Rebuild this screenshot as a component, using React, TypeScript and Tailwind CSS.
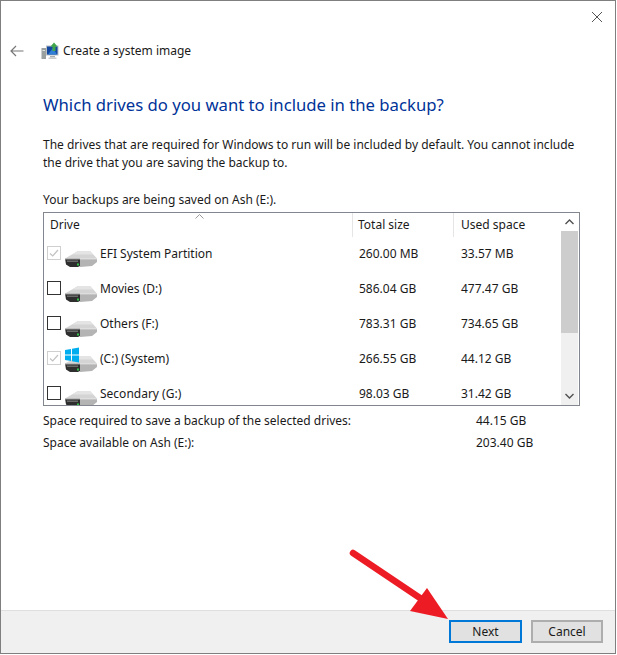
const font = { fontFamily: '"Noto Sans", "Open Sans", sans-serif' };

const rows = [
  { name: 'EFI System Partition', total: '260.00 MB', used: '33.57 MB', locked: true },
  { name: 'Movies (D:)', total: '586.04 GB', used: '477.47 GB' },
  { name: 'Others (F:)', total: '783.31 GB', used: '734.65 GB' },
  { name: '(C:) (System)', total: '266.55 GB', used: '44.12 GB', locked: true, windows: true },
  { name: 'Secondary (G:)', total: '98.03 GB', used: '31.42 GB' },
];

function DriveIcon({ windows }: { windows?: boolean }) {
  return (
    <svg width="34" height="34" viewBox="0 0 34 34" className="shrink-0">
      <path d="M1 23.5 L14 16 H26 L33 23.5 Z" fill="#d4d4d4" />
      <path d="M14 16 H26 L29 19.5 H8 Z" fill="#e4e4e4" />
      <path d="M1 23.5 H16 V31 L14 32 H6 L2 29.5 Z" fill="#2e2e2e" />
      <path d="M16 23.5 H33 V27 L28 31 L16 32 Z" fill="#b4b4b4" />
      <path d="M1 23.5 H33 V24.3 H1 Z" fill="#efefef" />
      <rect x="3" y="25.5" width="11" height="1.5" fill="#6a6a6a" />
      <rect x="13" y="28.5" width="2" height="2" fill="#35c24a" />
      {windows && (
        <path d="M1 10 L7 9 V14.5 H1 Z M8 8.8 L15 7.5 V14.5 H8 Z M1 15.5 H7 V21 L1 20 Z M8 15.5 H15 V22.5 L8 21.2 Z" fill="#00adef" />
      )}
    </svg>
  );
}

function CheckBox({ locked }: { locked?: boolean }) {
  return (
    <div className={`w-[14px] h-[14px] shrink-0 border flex items-center justify-center ${locked ? 'border-[#cfcfcf]' : 'border-[#333333]'}`}>
      {locked && (
        <svg width="12" height="12" viewBox="0 0 12 12">
          <path d="M2 6.5 L4.7 9 L10 3" fill="none" stroke="#c2c2c2" strokeWidth="1.2" />
        </svg>
      )}
    </div>
  );
}

function SystemImageIcon() {
  return (
    <svg width="18" height="18" viewBox="0 0 18 18">
      <rect x="0.5" y="6" width="4.5" height="11" fill="#9a9f9f" />
      <rect x="1.5" y="8" width="2.5" height="1" fill="#dfe3e3" />
      <rect x="5" y="3.5" width="12.5" height="10" fill="#b9c0c4" />
      <rect x="6" y="4.5" width="10.5" height="8" fill="#14479f" />
      <path d="M7 12.5 L12 6 L16 12.5 Z" fill="#2f7fd6" />
      <rect x="9" y="14" width="5" height="1.5" fill="#a9adad" />
      <rect x="7.5" y="15.5" width="8" height="1.5" fill="#c9cccc" />
      <path d="M13 0.5 L16.5 4.5 H14.5 V9 H11.5 V4.5 H9.5 Z" fill="#3fa64a" />
    </svg>
  );
}

export default function App() {
  return (
    <div style={font} className="relative w-[617px] h-[655px] bg-white overflow-hidden text-[12px] text-[#1a1a1a]">
      <div className="w-[616px] h-[654px] border border-[#7f7f7f] flex flex-col">
        <div className="h-[32px] flex justify-end pr-[12px] pt-[10px]">
          <svg width="12" height="12" viewBox="0 0 12 12">
            <path d="M1 1 L11 11 M11 1 L1 11" stroke="#555555" strokeWidth="1" fill="none" />
          </svg>
        </div>

        <div className="h-[36px] flex items-center pl-[9px]">
          <svg width="14" height="12" viewBox="0 0 14 12">
            <path d="M13.5 6 H1 M6 1 L1 6 L6 11" stroke="#777777" strokeWidth="1.2" fill="none" />
          </svg>
          <div className="ml-[17px] mr-[4px] flex items-center">
            <SystemImageIcon />
          </div>
          <span className="text-[12px]">Create a system image</span>
        </div>

        <div className="flex-1 pl-[42px] pr-[36px]">
          <h1 className="mt-[24px] text-[16.7px] leading-[24px] font-normal text-[#003399]">
            Which drives do you want to include in the backup?
          </h1>
          <p className="mt-[19px] leading-[18px] w-[540px]">
            The drives that are required for Windows to run will be included by default. You cannot include the drive that you are saving the backup to.
          </p>
          <p className="mt-[19px] leading-[18px]">Your backups are being saved on Ash (E:).</p>

          <div className="mt-[3px] w-[537px] h-[194px] border border-[#82878f] flex overflow-hidden">
            <div className="flex-1 min-w-0 overflow-hidden">
              <div className="relative h-[24px] grid grid-cols-[309px_101px_97px] items-center">
                <span className="pl-[6px] border-r border-[#e5e5e5] h-full flex items-center">Drive</span>
                <span className="pl-[5px] border-r border-[#e5e5e5] h-full flex items-center">Total size</span>
                <span className="pl-[7px] h-full flex items-center">Used space</span>
                <svg width="9" height="5" viewBox="0 0 9 5" className="absolute left-[151px] top-[1px]">
                  <path d="M0.5 4.5 L4.5 0.5 L8.5 4.5" stroke="#9a9a9a" fill="none" />
                </svg>
              </div>
              {rows.map((row) => (
                <div key={row.name} className="h-[35px] grid grid-cols-[309px_101px_97px]">
                  <div className="flex items-start pl-[3px]">
                    <div className="mt-[9px]"><CheckBox locked={row.locked} /></div>
                    <div className="-mt-[2px] ml-[3px]"><DriveIcon windows={row.windows} /></div>
                    <span className="ml-[2px] mt-[8px] leading-[18px]">{row.name}</span>
                  </div>
                  <span className="pl-[6px] mt-[8px] leading-[18px]">{row.total}</span>
                  <span className="pl-[7px] mt-[8px] leading-[18px]">{row.used}</span>
                </div>
              ))}
            </div>
            <div className="w-[17px] mr-px bg-[#f0f0f0] flex flex-col">
              <div className="h-[18px] flex items-center justify-center bg-white">
                <svg width="9" height="6" viewBox="0 0 9 6"><path d="M0.5 5 L4.5 1 L8.5 5" stroke="#505050" strokeWidth="1.4" fill="none" /></svg>
              </div>
              <div className="h-[102px] bg-[#cdcdcd]" />
              <div className="flex-1" />
              <div className="h-[18px] flex items-center justify-center">
                <svg width="9" height="6" viewBox="0 0 9 6"><path d="M0.5 1 L4.5 5 L8.5 1" stroke="#505050" strokeWidth="1.4" fill="none" /></svg>
              </div>
            </div>
          </div>

          <div className="mt-[6px] grid grid-cols-[433px_auto] gap-y-[4px] leading-[18px]">
            <span>Space required to save a backup of the selected drives:</span>
            <span>44.15 GB</span>
            <span>Space available on Ash (E:):</span>
            <span>203.40 GB</span>
          </div>
        </div>

        <div className="h-[43px] bg-[#f0f0f0] border-t border-[#dfdfdf] flex justify-end items-start pt-[9px] pr-[12px] gap-[9px]">
          <button className="w-[73px] h-[23px] bg-[#e1e1e1] border-2 border-[#0078d7] text-[12px] leading-none">Next</button>
          <button className="w-[72px] h-[23px] bg-[#e1e1e1] border-2 border-[#adadad] text-[12px] leading-none">Cancel</button>
        </div>
      </div>

      {/* annotation arrow over the dialog */}
      <svg width="617" height="655" viewBox="0 0 617 655" className="absolute inset-0 pointer-events-none">
        <path d="M353 553 L420 598" stroke="#ed1c24" strokeWidth="6.5" strokeLinecap="round" fill="none" />
        <path d="M427 588 L448 619 L410 611 Z" fill="#ed1c24" />
      </svg>
    </div>
  );
}
